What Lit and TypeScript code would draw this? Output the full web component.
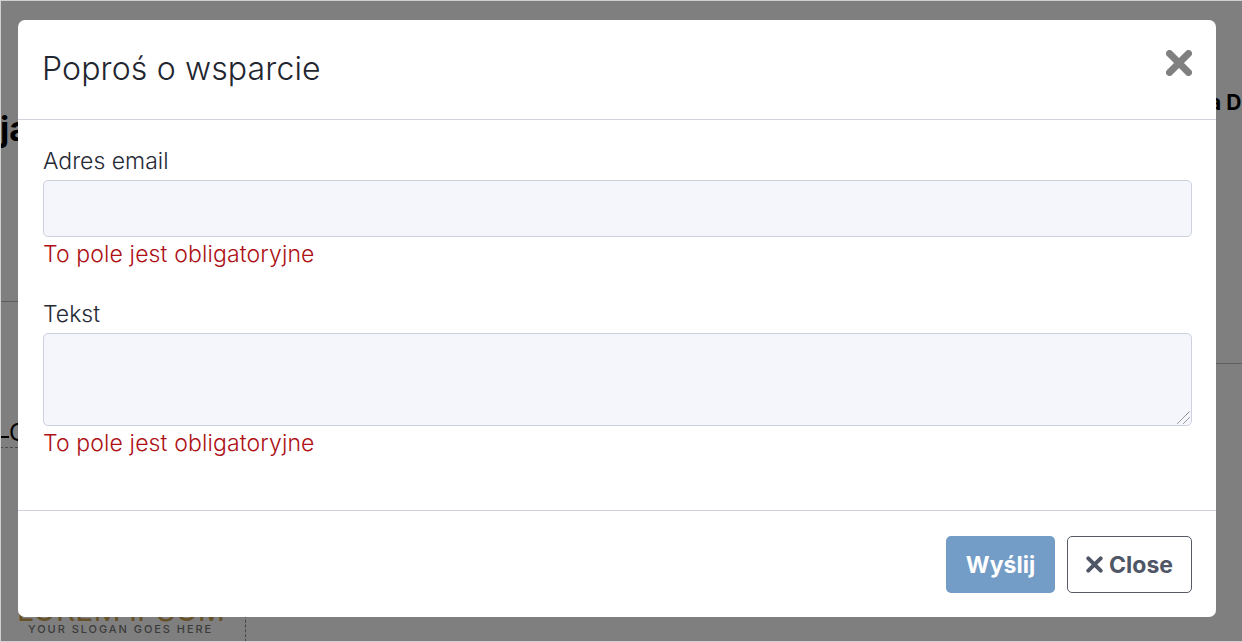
import { LitElement, html, css } from 'lit';
import { customElement } from 'lit/decorators.js';

// Support request modal, open over a dimmed page
@customElement('app-root')
export class AppRoot extends LitElement {
  static styles = css`
    :host {
      display: block;
      position: relative;
      width: 1242px;
      height: 642px;
      overflow: hidden;
      font-family: 'Inter', 'Liberation Sans', sans-serif;
      color: #262a35;
      background: #fff;
    }

    /* what is left visible of the page behind the modal */
    .behind {
      position: absolute;
      inset: 0;
      color: #000;
    }
    .behind span,
    .behind i {
      position: absolute;
      display: block;
    }
    .ja {
      left: 0;
      top: 108px;
      font-size: 34px;
      font-weight: 700;
    }
    .name {
      left: 1209px;
      top: 90px;
      font-size: 21px;
      font-weight: 700;
    }
    .lo {
      left: 9px;
      top: 418px;
      font-size: 24px;
    }
    .lo-bar {
      left: 0;
      top: 436px;
      width: 9px;
      height: 2px;
      background: #000;
    }
    .line-left {
      left: 0;
      top: 301px;
      width: 18px;
      height: 1px;
      background: #bbb;
    }
    .line-right {
      left: 1216px;
      top: 363px;
      width: 26px;
      height: 1px;
      background: #bbb;
    }
    .dash-left {
      left: 0;
      top: 447px;
      width: 18px;
      border-top: 1px dashed #999;
    }
    .dash-v {
      left: 245px;
      top: 610px;
      height: 32px;
      border-left: 1px dashed #888;
    }
    .logo {
      left: 17px;
      top: 600px;
      font-size: 30px;
      line-height: 20px;
      font-weight: 400;
      white-space: nowrap;
      color: #cfa350;
    }
    .slogan {
      left: 28px;
      top: 622px;
      font-size: 11px;
      line-height: 14px;
      font-weight: 500;
      letter-spacing: 1.95px;
      white-space: nowrap;
      color: #777;
    }

    .overlay {
      position: absolute;
      inset: 0;
      background: rgba(0, 0, 0, 0.5);
      box-sizing: border-box;
      border-top: 1px solid #d0d0d0;
      border-left: 1px solid #d0d0d0;
      border-bottom: 1px solid #d0d0d0;
    }

    .modal {
      position: absolute;
      left: 18px;
      top: 20px;
      width: 1198px;
      height: 597px;
      background: #fff;
      border-radius: 7px;
      display: flex;
      flex-direction: column;
    }

    .head {
      height: 100px;
      box-sizing: border-box;
      border-bottom: 1px solid #cfd2da;
      display: flex;
      justify-content: space-between;
      padding: 0 25px;
    }
    .head h1 {
      margin: 29px 0 0 -1px;
      font-size: 32px;
      line-height: 40px;
      font-weight: 300;
      letter-spacing: 0.15px;
      color: #22262f;
    }
    .x {
      margin-top: 30px;
      margin-right: -1px;
      width: 26px;
      height: 26px;
    }

    .body {
      flex: 1;
      padding: 27px 24px 0 25px;
    }
    .field {
      margin-bottom: 29px;
    }
    label {
      display: block;
      font-size: 23px;
      line-height: 28px;
      font-weight: 350;
      letter-spacing: 0;
      margin-bottom: 5px;
    }
    .box {
      display: block;
      width: 100%;
      box-sizing: border-box;
      background: #f4f6fb;
      border: 1px solid #cdd1de;
      border-radius: 5px;
      margin: 0;
      padding: 0;
      outline: none;
      resize: none;
    }
    input.box {
      height: 57px;
    }
    textarea.box {
      height: 93px;
    }
    .area {
      position: relative;
    }
    .grip {
      position: absolute;
      right: 2px;
      bottom: 2px;
      width: 13px;
      height: 13px;
    }
    .err {
      font-size: 23px;
      line-height: 34px;
      font-weight: 350;
      letter-spacing: 0.13px;
      color: #ad0f15;
    }

    .foot {
      height: 107px;
      box-sizing: border-box;
      border-top: 1px solid #cfd2da;
      padding: 25px 24px 0 0;
      display: flex;
      justify-content: flex-end;
      gap: 12px;
    }
    button {
      height: 57px;
      box-sizing: border-box;
      border-radius: 5px;
      font: 700 23px 'Inter', 'Liberation Sans', sans-serif;
      display: flex;
      align-items: center;
      justify-content: center;
      gap: 6px;
      padding: 0;
    }
    .send {
      width: 109px;
      background: #739cc6;
      border: none;
      color: #fff;
    }
    .close {
      width: 125px;
      background: #fff;
      border: 1px solid #565b66;
      color: #4f5666;
    }
    .close svg {
      width: 17px;
      height: 17px;
    }
  `;

  private cross(color: string, width: number) {
    return html`<svg viewBox="0 0 26 26" fill="none" stroke=${color} stroke-width=${width} stroke-linecap="round">
      <path d="M3.5 3.5 22.500 22.500M22.500 3.500 3.500 22.500" />
    </svg>`;
  }

  render() {
    return html`
      <div class="behind">
        <span class="ja">ja</span>
        <span class="name">a D</span>
        <i class="lo-bar"></i>
        <span class="lo">O</span>
        <i class="line-left"></i>
        <i class="line-right"></i>
        <i class="dash-left"></i>
        <i class="dash-v"></i>
        <span class="logo">LOREM IPSUM</span>
        <span class="slogan">YOUR SLOGAN GOES HERE</span>
      </div>
      <div class="overlay"></div>
      <div class="modal">
        <div class="head">
          <h1>Poproś o wsparcie</h1>
          <div class="x">${this.cross('#808080', 7)}</div>
        </div>
        <div class="body">
          <div class="field">
            <label>Adres email</label>
            <input class="box" type="text" />
            <div class="err">To pole jest obligatoryjne</div>
          </div>
          <div class="field">
            <label>Tekst</label>
            <div class="area">
              <textarea class="box"></textarea>
              <svg class="grip" viewBox="0 0 13 13" stroke="#555" stroke-width="1" stroke-dasharray="1 0.5">
                <path d="M0.500 12.500 12.500 0.500M6.500 12.500 12.500 6.500" />
              </svg>
            </div>
            <div class="err">To pole jest obligatoryjne</div>
          </div>
        </div>
        <div class="foot">
          <button class="send">Wyślij</button>
          <button class="close">${this.cross('#4f5666', 6)}Close</button>
        </div>
      </div>
    `;
  }
}
